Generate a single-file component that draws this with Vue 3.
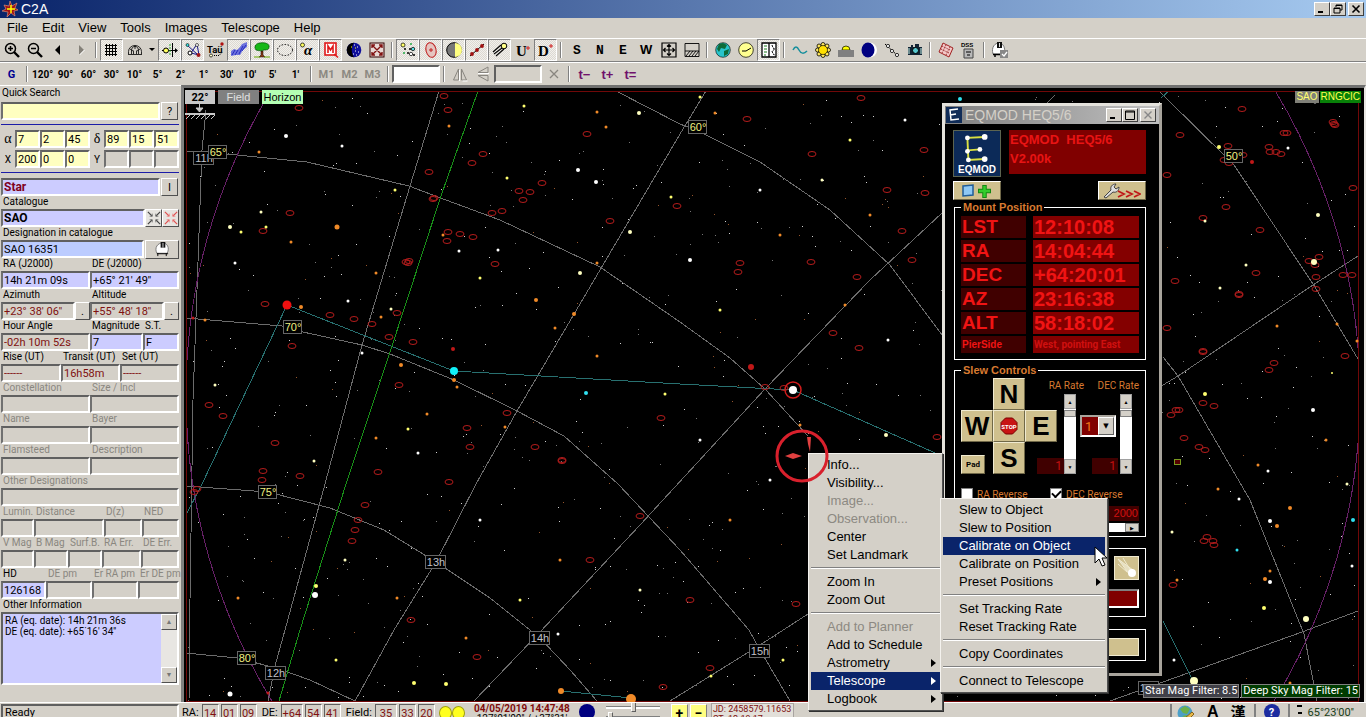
<script setup>
const menus = ['File', 'Edit', 'View', 'Tools', 'Images', 'Telescope', 'Help']

const lens = '<circle cx="6.5" cy="6.5" r="5" fill="none" stroke="#000" stroke-width="1.5"/><path d="M10 10l5 5" stroke="#000" stroke-width="2.4"/>'
const icons = {
  zin: lens + '<path d="M4 6.5h5M6.5 4v5" stroke="#000" stroke-width="1.5"/>',
  zout: lens + '<path d="M4 6.5h5" stroke="#000" stroke-width="1.5"/>',
  back: '<path d="M10 3v10L5 8z"/>',
  fwd: '<path d="M6 3v10l5-5z" fill="#848078"/><path d="M11.500 8l-5 5" stroke="#fff"/>',
  grid: '<path d="M2.500 2v12M5.500 2v12M8.500 2v12M11.500 2v12M1 3.500h12M1 6.500h12M1 9.500h12M1 12.500h12" stroke="#000"/>',
  dome: '<path d="M1 12.500h14M1.500 12V9.500a6.500 6 0 0 1 13 0V12M4.500 12V9a3.500 4.500 0 0 1 7 0v3M6.500 12V8.500M9.500 12V8.500M3 7l3 2M13 7l-3 2M8 3.500V7" fill="none" stroke="#000" stroke-width=".8"/>',
  equator: '<path d="M0 8.500h15M10.500 1v14" stroke="#000"/><path d="M8 2v12" stroke="#2fae2f" stroke-dasharray="2 1"/><circle cx="4" cy="8.500" r="2.500" fill="#ffff60" stroke="#000"/><path d="M13 6l3 2.500-3 2.500" fill="#000"/>',
  figure: '<path d="M2 3l10 9M12 2L6 11l8 2L12 2" fill="none" stroke="#000080" stroke-width=".9"/><circle cx="2.500" cy="3" r="1.500" fill="#3dd" stroke="#000" stroke-width=".6"/><circle cx="12" cy="3" r="1.500" fill="#fff" stroke="#000" stroke-width=".6"/><circle cx="5" cy="11" r="2" fill="#fff" stroke="#000"/><circle cx="13.500" cy="13" r="2" fill="#a01818"/>',
  tau: '<text x="-1" y="11" font-size="9.500" font-weight="700" font-family="Roboto,sans-serif">Taü</text><circle cx="14" cy="2" r="1.700" fill="#b01010"/><circle cx="3" cy="13.500" r="1.500" fill="#ffc" stroke="#000" stroke-width=".7"/><path d="M6 13.500h5l3-3" stroke="#000" fill="none" stroke-dasharray="1 1"/>',
  milky: '<path d="M0 9l3-2 3 1 3-3 2-3 5-2v5l-4 3-3 5H5l-5 1z" fill="#6d72dc"/><path d="M1 13L4 8M4 13l3-5M8 12l4-8M11 9l4-6" stroke="#252bc0"/>',
  tree: '<path d="M7 9h2v4l2 2H5l2-2z" fill="#8a3c10" stroke="#000" stroke-width=".5"/><path d="M2 8C-1 4 3 1 6 1c5-1 10 1 9 4 0 3-3 3-5 3-2 1-5 1-8 0z" fill="#17b817" stroke="#054f05" stroke-width=".7"/><path d="M0 15h6M10 15h6" stroke="#6a0"/>',
  bound: '<ellipse cx="8" cy="8" rx="7.500" ry="5.500" fill="none" stroke="#000" stroke-dasharray="1.500 1.500"/>',
  alpha: '<text x="4" y="13" font-size="15" font-weight="700" font-style="italic" font-family="Liberation Serif,serif">α</text><circle cx="2.500" cy="3" r="2" fill="#ffff60" stroke="#000" stroke-width=".7"/>',
  messier: '<rect x="2" y="1" width="11" height="12" fill="#fff" stroke="#e01818" stroke-width="1.600"/><path d="M5 11V4l2.500 4L10 4v7" fill="none" stroke="#e01818" stroke-width="1.600"/><path d="M11 12l4 3.500" stroke="#e01818" stroke-width="1.500"/>',
  night: '<circle cx="8" cy="8" r="7.300" fill="#10109c"/><path d="M8 .7a7.300 7.300 0 0 0 0 14.600C5 11 5 5 8 .7z" fill="#000"/><path d="M8 3h1M11 5h1M9 9h1M12 10h1M7 12h1M10 13h1" stroke="#fff"/><path d="M5 5h1M9 6h1" stroke="#ff0"/>',
  full: '<rect x="1" y="1" width="14" height="14" fill="#e8d8d4" stroke="#300"/><path d="M3 3l10 10M13 3L3 13M3 6V3h3M10 3h3v3M13 10v3h-3M6 13H3v-3" fill="none" stroke="#801010" stroke-width="1.400"/>',
  stars: '<circle cx="3" cy="3" r="2" fill="#ff6" stroke="#000" stroke-width=".7"/><circle cx="13" cy="7" r="1.700" fill="#5dd" stroke="#000" stroke-width=".7"/><circle cx="11" cy="12" r="1.700" fill="#fff" stroke="#000" stroke-width=".7"/><path d="M4 7h2M9 7h2M7 11h2M13 13h2" stroke="#000" stroke-width="1.500"/><path d="M10 2h2M3 11h2" stroke="#2a4" stroke-width="1.500"/>',
  dso: '<ellipse cx="8" cy="8" rx="5" ry="7.500" fill="#e5c5c0" stroke="#c02020" transform="rotate(-15 8 8)"/><path d="M6 8h4M8 6v4" stroke="#c02020"/>',
  planet: '<circle cx="8" cy="8" r="7.300" fill="#777" stroke="#000"/><path d="M9 1a7 7 0 0 1 0 14z" fill="#ffff80"/>',
  aster: '<path d="M1 14L15 2" stroke="#000"/><circle cx="3" cy="12" r="1.900" fill="#a01010"/><circle cx="8" cy="8" r="1.900" fill="#a01010"/><circle cx="13" cy="4" r="1.900" fill="#a01010"/>',
  comet: '<path d="M9 3L1 10M10 6L2 12M12 7l-8 7" stroke="#000" stroke-width="1.100"/><circle cx="12" cy="4" r="2.800" fill="#ff8" stroke="#000"/>',
  u: '<text x="1" y="14" font-size="15" font-weight="700" font-family="Liberation Serif,serif">U</text><path d="M11 6h4M13 4v4" stroke="#d02020"/>',
  d: '<text x="0" y="14" font-size="15" font-weight="700" font-family="Liberation Serif,serif">D</text><path d="M11 4h4M13 2v4" stroke="#d02020"/>',
  s: '<text x="4" y="12" font-size="13" font-weight="700" font-family="Liberation Mono,monospace">S</text>',
  n: '<text x="4" y="12" font-size="13" font-weight="700" font-family="Liberation Mono,monospace">N</text>',
  e: '<text x="4" y="12" font-size="13" font-weight="700" font-family="Liberation Mono,monospace">E</text>',
  w: '<text x="2" y="12" font-size="13" font-weight="700" font-family="Liberation Sans,sans-serif">W</text>',
  zenith: '<path d="M1 1h14v14H1zM8 3v10M3 8h10M6 4.500L8 2.500l2 2M6 11.500l2 2 2-2M4.500 6l-2 2 2 2M11.500 6l2 2-2 2" fill="none" stroke="#000" stroke-width="1.200"/>',
  horizon: '<path d="M1 1.500h14v13H1zM1 9h14M2 14l4-5M5 14l4-5M8 14l4-5M11 14l4-5" fill="none" stroke="#000" stroke-width=".9"/>',
  globe: '<circle cx="8" cy="8" r="7.300" fill="#28c4cc" stroke="#000" stroke-width=".6"/><path d="M4 2l4-1 4 2-2 4-4-1-2 4-2-3zM9 9l5-2-1 5-4 2z" fill="#0d6b38"/>',
  clock: '<circle cx="8" cy="8" r="7.300" fill="#ffff90" stroke="#443"/><path d="M4 9h4l5-3" fill="none" stroke="#000"/>',
  panel: '<path d="M1 1h14v14H1zM8 1v14" fill="#fff" stroke="#000" stroke-width="1.300"/><path d="M3 4h3M3 7h3M3 10h3M3 13h2" stroke="#1a7a1a"/><path d="M11 3l1 3 2 1-3 2 1 3 2 1" fill="none" stroke="#000" stroke-dasharray="2 1"/>',
  wave: '<path d="M1 8c2-4 4-4 6 0s5 4 8 1" fill="none" stroke="#168f9c" stroke-width="1.500"/>',
  sun: '<g fill="#ffe860" stroke="#000" stroke-width=".8"><circle cx="8" cy="2.500" r="2"/><circle cx="8" cy="13.500" r="2"/><circle cx="2.500" cy="8" r="2"/><circle cx="13.500" cy="8" r="2"/><circle cx="4" cy="4" r="2"/><circle cx="12" cy="4" r="2"/><circle cx="4" cy="12" r="2"/><circle cx="12" cy="12" r="2"/></g><circle cx="8" cy="8" r="4.500" fill="#ffe000" stroke="#000" stroke-width=".6"/>',
  rise: '<path d="M4 8a4 4 0 0 1 8 0z" fill="#ff0" stroke="#000" stroke-width=".7"/><path d="M0 8h16v7H0z" fill="#808080"/>',
  moon: '<circle cx="8.500" cy="8" r="7.500" fill="#fff"/><ellipse cx="7" cy="8" rx="6.500" ry="7.500" fill="#000080"/>',
  nodes: '<path d="M1 2l13 12" stroke="#000" stroke-dasharray="2 1"/><circle cx="4" cy="4" r="1.600" fill="#fff" stroke="#000" stroke-width=".8"/><circle cx="8" cy="9" r="1.600" fill="#fff" stroke="#000" stroke-width=".8"/><circle cx="13" cy="13" r="1.600" fill="#fff" stroke="#000" stroke-width=".8"/>',
  camera: '<path d="M1 5h3V3h2v2h2V2h4v3h3v8H1z" fill="#123"/><path d="M2 6v6M14 6v6" stroke="#8cb0b0" stroke-width="1.500"/><circle cx="8.500" cy="8.500" r="3" fill="#58c8d0" stroke="#000"/>',
  field: '<path d="M5 1l10 5-4 9L1 10z" fill="#f3c8c8" stroke="#a02020"/><path d="M4 4l8 4M3 7l8 4M8 3l-4 8M12 5l-4 8" stroke="#902020" stroke-dasharray="1 1"/>',
  dss: '<path d="M3 7h9v9H3z" fill="#b8b8b8" stroke="#444"/><path d="M5 10h5M6 13h3" stroke="#000"/><text x="0" y="5" font-size="6" font-weight="700" font-family="Liberation Sans,sans-serif">DSS</text>',
  scope: '<path d="M2 12C-1 6 3 1 8 1s8 5 5 11z" fill="#fff" stroke="#777"/><path d="M6 0h5v6H6z" fill="#111"/><path d="M8.500 1v5" stroke="#ddd"/><path d="M2 12.500h12M3 12v3M12 12v3" stroke="#000"/>',
  scopeOk: '<path d="M1 12C-1 5 3 1 7 1s7 5 5 11z" fill="#fff" stroke="#777"/><path d="M5 0h5v6H5z" fill="#111"/><path d="M7.500 1v4" stroke="#ddd"/><path d="M1 12.500h7M3 12v3" stroke="#000" stroke-width="1.500"/><path d="M8 8h8v8H8z" fill="#888"/><path d="M10 12l2 2 3-4" fill="none" stroke="#fff" stroke-width="1.300"/>',
  flipH: '<path d="M6.500 3v11h-5zM9.500 3v11h5z" fill="none" stroke="#898680"/><path d="M7.500 4v11M15.500 15h-5" stroke="#fff"/>',
  flipV: '<path d="M3 6.500L13 1v5.500zM3 9.500L13 15V9.500z" fill="none" stroke="#898680"/><path d="M3 7.500h11" stroke="#fff"/>',
  cross: '<path d="M4 4l8 8M12 4l-8 8" stroke="#898680" stroke-width="1.300"/>',
}

const toolGroups = [
  [['zin', 0], ['zout', 0], ['back', 0], ['fwd', 0]],
  [['grid', 1], ['dome', 0], ['drop', 0], ['equator', 1], ['figure', 1], ['tau', 0], ['milky', 1], ['tree', 1], ['bound', 1], ['alpha', 1], ['messier', 1], ['night', 0], ['full', 0]],
  [['stars', 1], ['dso', 1], ['planet', 1], ['aster', 1], ['comet', 1], ['u', 0], ['d', 1]],
  [['s', 0], ['n', 0], ['e', 0], ['w', 0], ['zenith', 0], ['horizon', 0]],
  [['globe', 0], ['clock', 0], ['panel', 1]],
  [['wave', 0], ['sun', 0], ['rise', 0], ['moon', 0], ['nodes', 0], ['camera', 0]],
  [['field', 0], ['dss', 0]],
  [['scopeOk', 0]],
]
const fovs = ['120°', '90°', '60°', '30°', '10°', '5°', '2°', '1°', "30'", "10'", "5'", "1'"]

// Each cell: [label, value, kind, has a side button]
const rows = [
  { cls: 'c-half', cells: [['RA (J2000)', '14h 21m 09s', 'blue'], ['DE (J2000)', "+65° 21' 49''", 'blue']] },
  { cls: 'c-half', cells: [['Azimuth', "+23° 38' 06''", 'red', 1], ['Altitude', "+55° 48' 18''", 'red', 1]] },
  { cls: 'c-hour', cells: [['Hour Angle', '-02h 10m 52s', 'red'], ['Magnitude', '7', 'blue'], ['S.T.', 'F', 'blue']] },
  { cls: 'c-third', cells: [['Rise (UT)', '------', 'red'], ['Transit (UT)', '16h58m', 'red'], ['Set (UT)', '------', 'red']] },
  { cls: 'c-half', cells: [['Constellation', '', 'off'], ['Size / Incl', '', 'off']] },
  { cls: 'c-half', cells: [['Name', '', 'off'], ['Bayer', '', 'off']] },
  { cls: 'c-half', cells: [['Flamsteed', '', 'off'], ['Description', '', 'off']] },
  { cls: 'c-one', cells: [['Other Designations', '', 'off']] },
  { cls: 'c-dist', cells: [['Lumin.', '', 'off'], ['Distance', '', 'off'], ['D(z)', '', 'off'], ['NED', '', 'off']] },
  { cls: 'c-mag', cells: [['V Mag', '', 'off'], ['B Mag', '', 'off'], ['Surf.B.', '', 'off'], ['RA Err.', '', 'off'], ['DE Err.', '', 'off']] },
  { cls: 'c-quart', cells: [['HD', '126168', 'blue'], ['DE pm', '', 'off'], ['Er RA pm', '', 'off'], ['Er DE pm', '', 'off']] },
]
const alphaIn = ['7', '2', '45']
const deltaIn = ['89', '15', '51']
const xIn = ['200', '0', '0']

const lines = [
  'M186 151L206 152L237 155L307 162L409 186L446 200L500 220L600 267L680 322L730 358L765 389L808 436',
  'M186 318L282 326L303 332L362 345L390 354L454 380L517 411L564 436L618 484L680 550L749 630L760 650L790 701',
  'M186 486L268 492L330 508L384 530L436 562L490 598L540 638L571 671L597 701',
  'M186 653L237 658L276 668L310 680L355 701',
  'M616 91L680 124L698 131L760 162L830 210L890 265L942 335',
  'M206 110L202 150L197 290L193 400L190 600L189 701',
  'M439 91L410 186L362 345L325 484L285 630L275 666L268 701',
  'M706 91L680 134L600 270L517 411L476 484L436 562L394 630L355 701',
  'M474 701L540 632L640 525L765 389L870 280L942 213L1055 95',
  'M670 701L760 645L808 614L1000 490L1163 385L1178 376L1313 285L1358 256',
  'M1160 92L1234 165L1315 287L1358 359',
  'M1163 357L1178 376L1250 500L1304 634L1317 701',
  'M1110 701L1163 682L1302 632L1358 611',
]
const teal = [
  'M186 515L202 484L287 305L454 371L680 384L793 390L942 456',
  'M561 691L631 698',
  'M1163 621L1193 681',
  'M1161 98L1170 90',
]
const galaxies = `444,96 299,108 448,110 587,134 483,154 472,163 429,172 542,183 519,191 530,192 523,200 434,198 433,199 492,213 502,211
610,221 290,213 263,231 448,232 460,234 473,237 447,241 406,262 409,261 408,263 495,264 265,304 330,315 354,319 372,324 397,313 389,337
413,342 292,346 399,385 209,405 223,416 467,428 470,447 507,413 535,447 562,460 562,461 661,418 275,443 263,471 262,480 300,476 449,482
677,206 197,489 194,492 477,657 710,668 663,687 796,604 937,437 1242,109 1180,135 1228,146 1224,160 1229,163 1243,155 1287,133 1284,133
1269,147 1270,152 1276,152 1281,154 1333,122 1335,125 1334,124 1167,175 1226,207 1353,188 1203,218 1260,230 1175,281 1256,273 1239,294
1239,295 1309,261 1319,257 1315,265 1316,277 1316,289 1343,275 1352,275 1167,328 1203,351 1203,352 1274,363 1269,370 1345,356 1203,403
1214,406 1179,410 1176,410 1171,415 1184,438 1199,447 1205,450 1207,537 1204,541 1213,541 1214,545 1173,585 738,272 740,263 811,262
857,277 912,260 924,150 887,190 925,193 833,333 859,348 765,387 784,388 861,98 747,119 358,520 355,530 365,505 640,516 352,541 378,472
812,154 902,231 590,560 690,600 411,620`.split(/\s+/).map(p => p.split(','))

// Each star: x, y, radius, colour key
const tint = { w: '#ffffff', y: '#ffff70', c: '#ffffc0', o: '#f08a28', b: '#30e0f0', r: '#c01818' }
const stars = `286,136,2,w 342,146,1.5,w 230,227,2,c 241,232,1.5,y 261,212,1.5,c 266,227,1.5,y 259,152,1.5,o 291,242,1.5,o 235,263,1.5,w
337,227,2.5,o 395,190,1.5,y 449,126,1.5,o 524,106,1.5,y 597,112,1.5,o 606,127,1.5,o 639,113,2,c 578,170,2,w 596,182,2,w 507,178,1.5,y
459,251,1.5,w 498,250,1.5,w 443,235,1.5,o 480,278,1.5,y 597,263,1.5,o 630,232,2,c 580,273,2,c 376,273,1.5,o 348,301,1.5,w 301,307,2,o
391,309,1.5,c 381,317,1.5,o 193,318,1.5,r 205,320,1.5,o 362,353,1.5,w 453,349,2,r 401,365,2,o 454,380,2,o 457,387,1.5,o 555,328,1.5,o
536,300,2,o 574,314,2,o 597,356,1.5,o 586,393,2,b 665,394,1.5,y 427,414,1.5,o 408,429,1.5,y 505,427,1.5,o 376,438,1.5,o 418,453,1.5,w
314,461,1.5,c 215,385,1.5,c 671,197,1.5,y 397,598,1.5,o 316,586,2,y 315,595,3,w 336,660,1.5,y 414,683,2,y 446,684,2,y
466,638,1.5,o 558,634,1.5,w 711,676,1.5,y 783,660,1.5,y 230,694,2.5,w 268,693,1.5,r 561,691,3,o 631,699,5,o 886,435,2,c
800,425,1.5,o 751,367,3,r 700,97,1.5,y 960,99,2,b 1315,102,1.5,w 1219,147,2,y 1288,148,1.5,w 1252,162,2,r 1318,215,2,c 1205,221,1.5,c
1246,265,1.5,c 1314,262,3,c 1220,288,1.5,c 1277,326,1.5,o 1337,324,1.5,o 1357,341,1.5,o 1332,373,1,y 1205,394,2,y 1313,410,2,w
1326,440,1.5,o 1258,465,1.5,o 1268,471,1.5,w 1218,489,1.5,o 1239,499,1.5,w 1347,484,1.5,c 1290,508,2,o 1270,521,2,w 1277,526,2,o
1353,520,2,b 1237,550,1.5,b 1172,532,1.5,c 1352,566,1.5,w 1270,571,1.5,o 1265,579,2,o 1270,582,2,w 1177,580,1.5,o 1264,608,2,y
1306,619,3,c 1194,681,4,c 1174,660,1.5,w 1290,683,1.5,o 715,113,1.5,o 760,190,1.5,w 822,180,1.5,c 870,215,1.5,o 690,260,2,w
905,120,1.5,w 845,305,1.5,o 700,440,1.5,w 640,590,1.5,c 560,560,1.5,o 480,520,1.5,w 520,600,1.5,y 730,520,1.5,o 770,480,1.5,w
720,310,1.5,y 888,340,1.5,w 780,235,1.5,o 850,140,1.5,y 238,598,1.5,o 345,560,1.5,c`.split(/\s+/).map(p => {
  const [x, y, r, c] = p.split(',')
  return { x, y, r, fill: tint[c] }
})

let seed = 20190504
const rnd = () => {
  seed = (seed * 1664525 + 1013904223) % 4294967296
  return seed / 4294967296
}
const specks = { bright: '', dim: '', warm: '' }
for (let i = 0; i < 900; i++) {
  const dot = `M${188 + Math.floor(rnd() * 1168)} ${93 + Math.floor(rnd() * 606)}h1v1h-1z`
  const k = rnd()
  specks[k < 0.5 ? 'bright' : k < 0.88 ? 'dim' : 'warm'] += dot
}

const gridLabels = [
  [698, 127, '60°', 1], [293, 327, '70°', 1], [268, 492, '75°', 1], [247, 658, '80°', 1], [1234, 156, '50°', 1],
  [204, 158, '11h', 0], [218, 152, '65°', 1], [436, 562, '13h', 0], [540, 638, '14h', 0], [276, 673, '12h', 0], [760, 651, '15h', 0], [1149, 688, '16h', 0],
]

const mount = [['LST', '12:10:08'], ['RA', '14:04:44'], ['DEC', '+64:20:01'], ['AZ', '23:16:38'], ['ALT', '58:18:02']]

const context = [
  ['Info...'], ['Visibility...'], ['Image...', 'off'], ['Observation...', 'off'], ['Center'], ['Set Landmark'], null,
  ['Zoom In'], ['Zoom Out'], null,
  ['Add to Planner', 'off'], ['Add to Schedule'], ['Astrometry', 'more'], ['Telescope', 'more on'], ['Logbook', 'more'],
]
const submenu = [
  ['Slew to Object'], ['Slew to Position'], ['Calibrate on Object', 'on'], ['Calibrate on Position'], ['Preset Positions', 'more'], null,
  ['Set Tracking Rate'], ['Reset Tracking Rate'], null, ['Copy Coordinates'], null, ['Connect to Telescope'],
]
</script>

<template>
  <div class="app">
    <header class="title">
      <svg class="logo" viewBox="0 0 16 16"><path d="M8 0l2 5 5-3-2 5 3 2-4 1 1 5-4-3-4 4 1-5-6-1 4-2-2-4 5 1z" fill="#a01414" stroke="#f0a080" stroke-width=".6" /><path d="M9 4v8M5 8h8" stroke="#ff0" stroke-width="1.500" /></svg>
      <h1>C2A</h1>
      <div class="winbtns">
        <button aria-label="Minimize"><svg viewBox="0 0 12 10"><path d="M2 8h5" stroke="#000" stroke-width="2" /></svg></button>
        <button aria-label="Restore"><svg viewBox="0 0 12 10"><path d="M4 3V1h6v5H8M4 1.500h6M2 4h6v5H2zM2 4.500h6" fill="none" stroke="#000" /></svg></button>
        <button aria-label="Close" class="gap"><svg viewBox="0 0 12 10"><path d="M2.500 1.500l7 7M9.500 1.500l-7 7" stroke="#000" stroke-width="1.600" /></svg></button>
      </div>
    </header>

    <nav class="menubar"><button v-for="m in menus" :key="m">{{ m }}</button></nav>

    <div class="toolbar">
      <div v-for="(g, gi) in toolGroups" :key="gi" class="group">
        <button v-for="[name, on] in g" :key="name" :class="{ pressed: on, drop: name === 'drop' }" :aria-label="name">
          <svg v-if="name !== 'drop'" viewBox="0 0 16 16" v-html="icons[name]"></svg>
          <svg v-else viewBox="0 0 6 4" class="tiny"><path d="M0 0h6L3 3z" /></svg>
        </button>
      </div>
    </div>

    <div class="toolbar second">
      <div class="group"><button class="blue">G</button></div>
      <div class="group"><button v-for="f in fovs" :key="f">{{ f }}</button></div>
      <div class="group"><button v-for="m in ['M1', 'M2', 'M3']" :key="m" class="dis">{{ m }}</button></div>
      <div class="group"><input class="white" aria-label="Field of view" /></div>
      <div class="group">
        <button aria-label="Mirror"><svg viewBox="0 0 16 16" v-html="icons.flipH"></svg></button>
        <button aria-label="Flip"><svg viewBox="0 0 16 16" v-html="icons.flipV"></svg></button>
        <input aria-label="Rotation" disabled />
        <button aria-label="Clear"><svg viewBox="0 0 16 16" v-html="icons.cross"></svg></button>
      </div>
      <div class="group"><button v-for="t in ['t−', 't+', 't=']" :key="t" class="time">{{ t }}</button></div>
    </div>

    <main class="work">
      <aside class="side">
        <label class="lab quick" for="quick">Quick Search</label>
        <div class="line"><input id="quick" class="yel" /><button class="sq">?</button></div>
        <hr />
        <div class="coords">
          <span>α</span><input v-for="(v, i) in alphaIn" :key="'a' + i" class="yel" :value="v" aria-label="Right ascension" />
          <span>δ</span><input v-for="(v, i) in deltaIn" :key="'d' + i" class="yel" :value="v" aria-label="Declination" />
          <span class="sm">X</span><input v-for="(v, i) in xIn" :key="'x' + i" class="yel" :value="v" aria-label="X" />
          <span class="sm">Y</span><input v-for="i in 3" :key="'y' + i" class="off" aria-label="Y" />
        </div>
        <hr />
        <div class="line"><input class="blue star" value="Star" aria-label="Object type" readonly /><button class="sq">I</button></div>
        <label class="lab" for="cat">Catalogue</label>
        <div class="line">
          <input id="cat" class="blue strong" value="SAO" readonly />
          <button class="pt" aria-label="Center on map"><svg viewBox="0 0 16 16"><path d="M1 1l5 5M15 1l-5 5M1 15l5-5M15 15l-5-5" stroke="#444" stroke-width="1.300" /><path d="M6 3v3H3M10 3v3h3M6 13v-3H3M10 13v-3h3" fill="none" stroke="#777" /></svg></button>
          <button class="pt" aria-label="Center and mark"><svg viewBox="0 0 16 16"><path d="M1 1l5 5M15 1l-5 5M1 15l5-5M15 15l-5-5" stroke="#e05050" stroke-width="1.300" /><path d="M6 3v3H3M10 3v3h3M6 13v-3H3M10 13v-3h3" fill="none" stroke="#e88" /></svg></button>
        </div>
        <label class="lab" for="des">Designation in catalogue</label>
        <div class="line">
          <input id="des" class="sel" value="SAO 16351" readonly />
          <button class="scope" aria-label="Slew telescope"><svg viewBox="0 0 16 16" v-html="icons.scope"></svg></button>
        </div>
        <div v-for="(r, ri) in rows" :key="ri" class="row" :class="r.cls">
          <div v-for="([l, v, k, b], ci) in r.cells" :key="ci" class="cell">
            <label class="lab" :class="{ grey: k === 'off' }" :for="`f${ri}-${ci}`">{{ l }}</label>
            <div class="line"><input :id="`f${ri}-${ci}`" :class="k" :value="v" readonly /><button v-if="b" class="dot">.</button></div>
          </div>
        </div>
        <label class="lab" for="info">Other Information</label>
        <div class="info">
          <textarea id="info" readonly>RA (eq. date): 14h 21m 36s
DE (eq. date): +65˙16' 34''</textarea>
          <div class="scroll"><button aria-label="Scroll up">▲</button><button aria-label="Scroll down">▼</button></div>
        </div>
      </aside>

      <section class="map">
        <svg class="sky" viewBox="184 88 1180 614" preserveAspectRatio="xMinYMin slice">
          <defs><clipPath id="skyclip"><rect x="186" y="91" width="1173" height="611" /></clipPath></defs>
          <g clip-path="url(#skyclip)">
            <g shape-rendering="crispEdges">
              <path :d="specks.bright" fill="#d0d0d0" /><path :d="specks.dim" fill="#757575" /><path :d="specks.warm" fill="#96552c" />
              <path v-for="(d, i) in lines" :key="i" :d="d" fill="none" stroke="#6c6c6c" />
              <path v-for="(d, i) in teal" :key="'t' + i" :d="d" fill="none" stroke="#287070" />
              <path d="M478 91L441 196L390 352L346 484L300 630L279 701" fill="none" stroke="#189018" />
              <circle cx="773" cy="395" r="587" fill="none" stroke="#672067" />
            </g>
            <ellipse v-for="([x, y], i) in galaxies" :key="'g' + i" :cx="x" :cy="y" rx="4" ry="2.500" fill="none" stroke="#b41c1c" />
          </g>
          <rect x="186.500" y="91.500" width="1172" height="610" fill="none" stroke="#700808" />
          <circle v-for="(s, i) in stars" :key="'s' + i" :cx="s.x" :cy="s.y" :r="s.r" :fill="s.fill" />
          <circle cx="287" cy="305" r="4.500" fill="#f01010" /><circle cx="454" cy="371" r="4" fill="#10f0f8" />
          <circle cx="793" cy="390" r="4" fill="#fff" /><circle cx="793" cy="390" r="8" fill="none" stroke="#d01c1c" stroke-width="1.500" />
          <rect x="1174.500" y="459.500" width="6" height="5" fill="#500" stroke="#7a9a20" />
          <g v-for="([x, y, t, dec], i) in gridLabels" :key="'l' + i">
            <rect :x="x - (dec ? 9.5 : 10.5)" :y="y - 6.5" :width="dec ? 18 : 20" height="13" fill="#000" stroke="#666" />
            <text :x="x" :y="y + 4" text-anchor="middle" :class="dec ? 'dec' : 'hr'">{{ t }}</text>
          </g>
          <g stroke="#c8c8c8" fill="#c8c8c8"><path d="M199.500 104v8M196 108h7l-3.500 4z" /><path d="M185 114h30" stroke-width="2" /><path d="M186 119l4-4M191 119l4-4M196 119l4-4M201 119l4-4M206 119l4-4M211 119l4-4" /></g>
        </svg>
        <div class="tabs"><button class="deg">22°</button><button class="fld">Field</button><button class="hor">Horizon</button></div>
        <div class="cats"><span class="sao">SAO</span><span class="rng">RNGCIC</span></div>
        <div class="filters"><span>Star Mag Filter: 8.5</span><span class="deep">Deep Sky Mag Filter: 15</span></div>
      </section>
    </main>

    <footer class="status">
      <div class="ready">Ready</div>
      <span class="sl ra">RA:</span><b>14</b><b>01</b><b>09</b>
      <span class="sl">DE:</span><b class="w">+64</b><b>54</b><b>41</b>
      <span class="sl">Field:</span><b class="w">35</b><b>33</b><b>20</b>
      <i class="bulb first"></i><i class="bulb"></i>
      <div class="date"><strong>04/05/2019 14:47:48</strong><span>127°01'00'' / +37°31'</span></div>
      <i class="ball"></i>
      <div class="sliders"><input type="range" value="52" aria-label="Speed" /><input type="range" value="5" aria-label="Step" /></div>
      <button class="pm">+</button><button class="pm">−</button>
      <div class="jd"><span>JD: 2458579.11653</span><span>ST: 12 19 17</span></div>
      <div class="ime">
        <svg viewBox="0 0 18 16"><circle cx="8" cy="9" r="7.500" fill="#4b9fc8" /><path d="M3 5l5-3 5 3-3 5-4-1zM5 12l5-1 2 4z" fill="#6cb04c" /><path d="M8 14l7-6 2 2-6 6z" fill="#e8b848" stroke="#85621c" /></svg>
        <b class="latin">A</b><b class="han">漢</b>
      </div>
      <button class="help">?</button>
      <div class="tray"><svg viewBox="0 0 6 12"><path d="M0 2h5M1 9h4" stroke="#000" stroke-width="1.800" /></svg><span>65°23'00''</span></div>
    </footer>

    <section class="eq">
      <header class="eqtitle">
        <svg viewBox="0 0 16 16"><rect width="16" height="16" fill="#102c58" /><path d="M12 2L4 3l1 10 8-1M4 8l6-1" fill="none" stroke="#fff" stroke-width="1.500" /></svg>
        <h2>EQMOD HEQ5/6</h2>
        <div class="winbtns">
          <button aria-label="Minimize window"><svg viewBox="0 0 12 10"><path d="M2 8h5" stroke="#000" stroke-width="2" /></svg></button>
          <button aria-label="Maximize window"><svg viewBox="0 0 12 10"><path d="M1.500 1h9v8.500h-9zM1.500 2h9" fill="none" stroke="#000" /></svg></button>
          <button aria-label="Close window" class="gap"><svg viewBox="0 0 12 10"><path d="M2.500 1.500l7 7M9.500 1.500l-7 7" stroke="#888" stroke-width="1.400" /></svg></button>
        </div>
      </header>
      <div class="eqbody">
        <div class="eqhead">
          <div class="badge">
            <svg viewBox="0 0 48 32"><path d="M32 5L14 6l1 23 17-1M14 19l13-1" fill="none" stroke="#d8e040" stroke-width="2" /><g fill="#fff"><circle cx="32" cy="5" r="3" /><circle cx="14" cy="6" r="2.500" /><circle cx="14" cy="20" r="2.500" /><circle cx="27" cy="18" r="2.500" /><circle cx="15" cy="29" r="2.500" /><circle cx="32" cy="28" r="3" /></g></svg>
            <span>EQMOD</span>
          </div>
          <div class="ver">EQMOD&nbsp; HEQ5/6<br />V2.00k</div>
        </div>
        <div class="eqbtns">
          <button aria-label="Add display"><svg viewBox="0 0 32 16"><path d="M2 3l10-1v10L2 13z" fill="#8ec8f4" stroke="#1f5c98" stroke-width="1.500" /><path d="M17 8h13M23.500 2v13" stroke="#138813" stroke-width="4.500" /><path d="M18 8h11M23.500 3v11" stroke="#34cc2c" stroke-width="2.500" /></svg></button>
          <button aria-label="Setup"><svg viewBox="0 0 38 16"><path d="M1 14l7-7c-1-3 1-6 5-6l-2 3 2 2 3-2c0 4-3 6-6 5l-7 6z" fill="#ddd" stroke="#444" /><path d="M15 8l6 3-6 3M23 8l6 3-6 3M31 8l6 3-6 3" fill="none" stroke="#c01818" stroke-width="1.800" /></svg></button>
        </div>
        <fieldset class="mount">
          <legend>Mount Position</legend>
          <dl>
            <template v-for="[k, v] in mount" :key="k"><dt>{{ k }}</dt><dd>{{ v }}</dd></template>
            <dt class="pier">PierSide</dt><dd class="pier">West, pointing East</dd>
          </dl>
        </fieldset>
        <fieldset class="slew">
          <legend>Slew Controls</legend>
          <div class="pad">
            <button class="n">N</button><button class="w">W</button>
            <button class="stop" aria-label="Stop"><svg viewBox="0 0 18 18"><path d="M5.500 1h7L17 5.500v7L12.500 17h-7L1 12.500v-7z" fill="#c81414" stroke="#700" /><text x="9" y="11.500" text-anchor="middle" font-size="6" font-weight="700" fill="#fff" font-family="Roboto,sans-serif">STOP</text></svg></button>
            <button class="e">E</button><button class="s">S</button><button class="pd">Pad</button>
            <span class="rl">RA Rate</span><span class="dl">DEC Rate</span>
            <span class="rv">1</span><span class="dv">1</span>
            <div class="vs rs"><button aria-label="RA rate up">▲</button><i></i><button aria-label="RA rate down">▼</button></div>
            <div class="vs ds"><button aria-label="DEC rate up">▲</button><i></i><button aria-label="DEC rate down">▼</button></div>
            <div class="pick"><select aria-label="Rate preset"><option>1</option></select><i>▼</i></div>
          </div>
          <div class="checks">
            <label><input type="checkbox" />RA Reverse</label>
            <label><input type="checkbox" checked />DEC Reverse</label>
          </div>
          <div class="val">2000</div>
          <div class="hs"><button aria-label="Next">▶</button></div>
        </fieldset>
        <fieldset class="track">
          <button class="meteor" aria-label="Track"><svg viewBox="0 0 22 22"><path d="M2 2l11 15 4-4zM7 1l8 13M2 7l9 8" fill="#e6dfc0" stroke="#f0ead0" /><circle cx="16" cy="16" r="4" fill="#fff" /></svg></button>
          <div class="trk"></div>
        </fieldset>
        <fieldset class="park"><button aria-label="Park"></button></fieldset>
      </div>
    </section>

    <ul class="pop ctx" role="menu">
      <li v-for="(it, i) in context" :key="i" :class="it ? it[1] : 'sep'"><button v-if="it" role="menuitem">{{ it[0] }}</button></li>
    </ul>
    <svg class="aim" viewBox="0 0 56 56"><path d="M11 28l8-3 9 3-9 3zM33 9h4l-1 15-2-8z" fill="#e04040" /><circle cx="28" cy="28" r="25" fill="none" stroke="#d8202c" stroke-width="3" /></svg>
    <ul class="pop sub" role="menu">
      <li v-for="(it, i) in submenu" :key="i" :class="it ? it[1] : 'sep'"><button v-if="it" role="menuitem">{{ it[0] }}</button></li>
    </ul>
    <svg class="cursor" viewBox="0 0 13 22"><path d="M1 1v16l4-4 3 7 3-1-3-7h5z" fill="#fff" stroke="#000" /></svg>
  </div>
</template>

<style>
body { background: #d4d0c8; overflow: hidden; }
</style>

<style scoped>
.app { position: relative; display: flex; flex-direction: column; height: 100vh; overflow: hidden; background: #d4d0c8; font-family: "Liberation Sans", Arial, sans-serif; font-size: 13px; color: #000; }
.app * { box-sizing: border-box; }
button { font: inherit; color: inherit; padding: 0; border: 0; background: none; display: flex; align-items: center; justify-content: center; }
h1, h2 { margin: 0; font-size: 13px; font-weight: 400; }
input, textarea, select { font: inherit; color: inherit; border-radius: 0; min-width: 0; }

.title { display: flex; align-items: center; flex: none; height: 18px; padding: 0 2px; background: linear-gradient(90deg, #0a246a, #a6caf0); color: #fff; }
.title .logo { width: 16px; height: 16px; margin-right: 3px; }
.title h1 { line-height: 18px; font-size: 14px; }
.winbtns { display: flex; margin-left: auto; }
.winbtns button { width: 16px; height: 14px; background: #d4d0c8; border: 1px solid; border-color: #fff #404040 #404040 #fff; }
.winbtns svg { width: 12px; height: 10px; }
.winbtns .gap { margin-left: 2px; }

.menubar { display: flex; flex: none; height: 20px; gap: 14px; padding: 0 7px; }
.menubar button { line-height: 20px; }

.toolbar { display: flex; flex: none; height: 24px; border-top: 1px solid #fff; border-bottom: 1px solid #808080; }
.toolbar.second { height: 23px; border-bottom: 0; font: 700 10px Roboto, sans-serif; }
.group { display: flex; align-items: center; }
.group + .group { position: relative; padding-left: 8px; }
.group + .group::before { content: ""; position: absolute; left: 3px; top: 3px; bottom: 3px; width: 2px; background: linear-gradient(90deg, #808080 50%, #fff 50%); }
.group button { width: 23px; height: 22px; }
.group svg { width: 16px; height: 16px; overflow: visible; }
.group .drop { width: 12px; }
.group .tiny { width: 6px; height: 4px; }
.group .pressed { border: 1px solid; border-color: #808080 #fff #fff #808080; background: repeating-conic-gradient(#f2f0ec 0 25%, #dcd9d2 0 50%) 0 0 / 2px 2px; }
.group input { width: 48px; height: 18px; border: 2px solid; border-color: #606060 #fff #fff #606060; background: #d4d0c8; }
.group .white { background: #fff; }
.group .blue { color: #000090; font-size: 11px; }
.group .dis { color: #8c8982; font-size: 11px; }
.group .time { color: #70106c; font: 700 13px "Liberation Sans", sans-serif; }

.work { display: flex; flex: 1; min-height: 0; }
.side { flex: none; width: 181px; padding: 0 2px 0 1px; border-top: 1px solid #fff; overflow: hidden; font: 11px Roboto, sans-serif; }
.lab { display: block; height: 13px; padding-left: 2px; font-size: 10px; line-height: 12px; white-space: nowrap; }
.lab.quick { height: 16px; padding-left: 1px; line-height: 14px; }
.grey { color: #8a8780; }
.line { display: flex; height: 18px; }
.line input, .coords input { flex: 1; width: 100%; height: 18px; padding: 0 1px; border: 2px solid; border-color: #707070 #fff #fff #707070; border-top-color: #606060; background: #d4d0c8; }
.side .yel { background: #ffffc0; }
.side .blue { background: #ccccff; }
.side .sel { background: #bcccff; }
.side .red { color: #801010; }
.side .star { color: #800020; font-weight: 700; font-size: 12px; }
.side .strong { font-weight: 700; font-size: 12px; }
.line button { flex: none; background: #d4d0c8; border: 1px solid; border-color: #fff #505050 #505050 #fff; }
.line .sq { width: 17px; margin: 0 1px; }
.line .dot { width: 15px; }
.line .pt { width: 17px; background: #e6e4e0; }
.line .pt svg { width: 14px; height: 14px; }
.line .scope { width: 34px; height: 19px; margin-left: 1px; }
.line .scope svg { width: 15px; height: 15px; }
.side hr { height: 1px; margin: 4px 0 5px; border: 0; background: #1c1ca8; }
.coords { display: grid; grid-template-columns: 14fr 25fr 25fr 25fr 14fr 25fr 25fr 25fr; row-gap: 2px; font-size: 11px; }
.coords span { display: flex; align-items: center; justify-content: center; font: 14px "Liberation Serif", serif; line-height: 14px; }
.coords .sm { font: 10px Roboto, sans-serif; }
.row { display: grid; }
.cell { min-width: 0; }
.c-one { grid-template-columns: 1fr; }
.c-half { grid-template-columns: 1fr 1fr; }
.c-hour { grid-template-columns: 89fr 53fr 36fr; }
.c-third { grid-template-columns: 60fr 59fr 59fr; }
.c-dist { grid-template-columns: 33fr 70fr 38fr 37fr; }
.c-mag { grid-template-columns: 33fr 34fr 34fr 39fr 38fr; }
.c-quart { grid-template-columns: 45fr 46fr 46fr 41fr; }
.info { display: flex; height: 73px; border: 2px solid; border-color: #606060 #fff #fff #606060; background: #ccccff; }
.info textarea { flex: 1; padding: 1px 2px; border: 0; background: none; resize: none; overflow: hidden; font: 10px Roboto, sans-serif; line-height: 11px; white-space: pre; }
.scroll { display: flex; flex-direction: column; justify-content: space-between; width: 16px; background: #e8e6e2; }
.scroll button { height: 16px; font-size: 7px; color: #777; background: #d4d0c8; border: 1px solid; border-color: #fff #505050 #505050 #fff; }

.map { position: relative; flex: 1; min-width: 0; overflow: hidden; background: #000; border: solid #808080; border-width: 3px 2px 0 3px; border-right-color: #e8e6e2; border-top-color: #707070; }
.sky { display: block; width: 100%; height: 100%; }
.sky text { font: 11px "Liberation Sans", sans-serif; }
.dec { fill: #f0f080; }
.hr { fill: #c0c0c8; }
.tabs, .cats, .filters { position: absolute; display: flex; font-size: 11px; line-height: 14px; white-space: nowrap; }
.tabs { left: 1px; top: 2px; gap: 3px; }
.tabs button { height: 14px; width: 41px; }
.tabs .deg { width: 30px; background: #c8c8c8; font: 700 11px Roboto, sans-serif; }
.tabs .fld { background: #808080; color: #e0e0e0; }
.tabs .hor { background: #b4ffb4; }
.cats { right: 3px; top: 3px; gap: 1px; font-size: 10px; line-height: 12px; }
.cats span { padding: 0 1px; }
.sao { background: #808078; color: #ffff70; }
.rng { background: #088008; color: #ffff50; }
.filters { right: 4px; bottom: 4px; gap: 2px; line-height: 12px; color: #fff; font-family: Roboto, sans-serif; }
.filters span { padding: 0 1px; background: #404048; border: 1px solid #808080; }
.filters .deep { background: #003c00; }

.status { display: flex; flex: none; align-items: flex-start; height: 15px; padding-top: 1px; border-top: 1px solid #fff; overflow: hidden; white-space: nowrap; font: 11px Roboto, sans-serif; line-height: 17px; }
.status > * { flex: none; }
.ready { width: 178px; height: 22px; margin: 0 2px 0 1px; padding-left: 2px; border: 2px solid; border-color: #606060 #fff #fff #606060; line-height: 14px; }
.sl { padding: 0 3px; }
.sl.ra { padding-left: 1px; }
.status > b { width: 17px; height: 22px; margin-right: 2px; font-weight: 400; text-align: center; color: #801010; border: 1px solid; border-color: #606060 #fff #fff #606060; }
.status > b.w { width: 22px; }
.bulb { width: 13px; height: 14px; margin-top: 2px; border-radius: 50%; background: #ffff20; border: 1px solid #a0a010; }
.bulb.first { margin-left: 2px; }
.date { width: 98px; margin: 0 0 0 8px; display: flex; flex-direction: column; align-items: center; font-size: 10px; line-height: 10px; }
.date strong { color: #800c0c; }
.ball { width: 16px; height: 16px; margin: 0 0 0 8px; border-radius: 50%; background: #000080; }
.sliders { display: flex; flex-direction: column; width: 54px; margin: -2px 11px 0; }
.sliders input { appearance: none; width: 100%; height: 10px; margin: 0; background: linear-gradient(#808080 50%, #fff 50%) 0 4px / 100% 3px no-repeat; }
.sliders input::-webkit-slider-thumb { appearance: none; width: 5px; height: 10px; background: #d4d0c8; border: 1px solid; border-color: #fff #606060 #606060 #fff; }
.pm { width: 17px; height: 18px; margin-right: 2px; background: #ffff80; border: 1px solid; border-color: #fff #808080 #808080 #fff; font-weight: 700; font-size: 14px; }
.jd { display: flex; flex-direction: column; width: 83px; margin: -1px 0 0 2px; padding-left: 1px; border: 1px solid #a8a4a0; background: #e2dfd9; color: #801010; font-size: 9px; line-height: 10px; }
.ime { display: flex; gap: 12px; margin-left: auto; padding: 0 8px 0 5px; border-left: 2px solid #808080; border-right: 2px solid #808080; }
.ime svg { width: 18px; height: 16px; }
.ime .latin { font: 700 16px "Liberation Sans", sans-serif; line-height: 16px; }
.ime .han { font: 700 15px "Noto Sans CJK SC", sans-serif; line-height: 16px; }
.help { width: 16px; height: 16px; margin: 0 8px; border-radius: 50%; background: #1c2ca0; color: #fff; font-weight: 700; }
.tray { display: flex; gap: 5px; margin-right: 12px; padding-left: 7px; border-left: 2px solid #808080; color: #184018; }
.tray svg { width: 6px; height: 12px; }

.eq { position: absolute; left: 942px; top: 103px; width: 220px; background: #000; border: 3px solid; border-color: #e4e2dc #a8a49c #a8a49c #e4e2dc; font-size: 11px; color: #d87a30; }
.eqtitle { display: flex; align-items: center; height: 18px; padding: 0 3px 0 1px; background: linear-gradient(90deg, #808080, #c0c0c0); color: #d4d0c8; }
.eqtitle > svg { width: 16px; height: 16px; margin-right: 3px; }
.eqtitle h2 { font-size: 14px; line-height: 18px; white-space: nowrap; }
.eqtitle .winbtns button { color: #000; }
.eqbody { padding: 6px 13px 12px 8px; }
.eqhead { display: flex; gap: 8px; height: 47px; }
.badge { display: flex; flex-direction: column; align-items: center; width: 48px; background: #0c2a58; border: 1px solid #5c6450; color: #fff; font: 700 10px "Liberation Sans", sans-serif; }
.badge svg { width: 46px; height: 33px; }
.ver { flex: 1; height: 44px; padding-left: 1px; background: #800000; color: #e81414; font: 700 13px "Liberation Sans", sans-serif; line-height: 19px; white-space: nowrap; }
.eqbtns { display: flex; justify-content: space-between; margin-top: 4px; }
.eq button { background: #cfc08e; }
.eqbtns button { width: 48px; height: 19px; border: 1px solid; border-color: #fff #706848 #706848 #fff; }
.eqbtns svg { height: 16px; }
.eq .winbtns button { background: #d4d0c8; }
fieldset { min-width: 0; margin: 0 0 0 1px; padding: 0 6px; border: 1px solid #fff; }
legend { height: 12px; padding: 0 2px; font-weight: 700; font-size: 11px; line-height: 12px; }
.mount { margin-top: 1px; padding-top: 3px; padding-bottom: 6px; }
dl { display: grid; grid-template-columns: 65px 1fr; column-gap: 7px; row-gap: 2px; margin: 0; color: #f01414; font-weight: 700; }
dt, dd { height: 22px; margin: 0; padding-left: 1px; line-height: 22px; font-size: 20px; background: #840000; white-space: nowrap; }
dt { background: #400000; font-size: 19px; }
dt.pier, dd.pier { height: 17px; line-height: 17px; font-size: 10px; }
dd.pier { font-family: Roboto, sans-serif; font-size: 10px; color: #d01010; }
.slew { margin-top: 4px; padding: 2px 6px 4px; }
.pad { display: grid; grid-template-columns: 32px 32px 12px 20px 7px 12px 16px 28px 12px 1fr; grid-template-rows: 32px 32px 32px; font-family: Roboto, sans-serif; font-size: 10px; }
.pad > button { color: #000; border: 1px solid; border-color: #f0ead0 #706848 #706848 #f0ead0; font: 700 26px "Liberation Sans", sans-serif; }
.pad > .n { grid-area: 1 / 2; }
.pad > .w { grid-area: 2 / 1; }
.pad > .stop { grid-area: 2 / 2; }
.stop svg { width: 18px; height: 18px; }
.pad > .e { grid-area: 2 / 3 / 3 / 5; }
.pad > .s { grid-area: 3 / 2; }
.pad > .pd { grid-area: 3 / 1; align-self: end; width: 24px; height: 19px; font: 700 8px Roboto, sans-serif; }
.rl { grid-area: 1 / 4 / 2 / 8; justify-self: end; margin-right: 8px; padding: 2px 0; white-space: nowrap; }
.dl { grid-area: 1 / 8 / 2 / 11; justify-self: end; padding: 2px 0; white-space: nowrap; }
.rv, .dv { align-self: end; height: 16px; line-height: 16px; padding-right: 2px; text-align: right; background: #400000; color: #c01010; font-size: 12px; }
.rv { grid-area: 3 / 4 / 4 / 6; }
.dv { grid-area: 3 / 8; width: 26px; }
.vs { display: flex; flex-direction: column; margin-top: 16px; background: #fff; }
.vs button { height: 15px; background: #d4d0c8; color: #000; font-size: 5px; border: 1px solid #a0a0a0; }
.vs i { height: 7px; margin: 1px 0 auto; background: #d4d0c8; border: 1px solid #808080; }
.rs { grid-area: 1 / 6 / 4 / 7; }
.ds { grid-area: 1 / 9 / 4 / 10; }
.pick { grid-area: 2 / 7 / 3 / 9; position: relative; align-self: center; width: 36px; height: 22px; margin-left: 4px; }
.pick select { appearance: none; width: 100%; height: 100%; padding: 0 3px; border: 2px solid; border-color: #a8a49c #fff #fff #a8a49c; background: #800000; color: #f07818; font-size: 13px; }
.pick i { position: absolute; right: 2px; top: 2px; width: 16px; height: 18px; background: #d4d0c8; border: 1px solid; border-color: #fff #606060 #606060 #fff; color: #000; font: 7px/16px "DejaVu Sans", sans-serif; text-align: center; pointer-events: none; }
.checks { display: grid; grid-template-columns: 1fr 1fr; margin-top: 14px; font: 10px Roboto, sans-serif; }
.checks label { display: flex; align-items: center; gap: 4px; height: 12px; white-space: nowrap; }
.checks input { appearance: none; width: 12px; height: 12px; margin: 0; background: #fff; border: 1px solid #808080; }
.checks input:checked::after { content: ""; display: block; width: 7px; height: 4px; margin: 1px; border: solid #000; border-width: 0 0 2px 2px; transform: rotate(-45deg); }
.val { width: 30px; height: 15px; margin: 6px 0 0 auto; background: #400000; color: #d01010; font: 11px "Liberation Sans", sans-serif; line-height: 15px; text-align: right; padding-right: 1px; }
.hs { display: flex; justify-content: flex-end; height: 9px; margin-top: 2px; background: #fff; }
.hs button { width: 14px; background: #d4d0c8; color: #000; border: 1px solid #808080; font-size: 5px; }
.track { margin-top: 11px; padding: 7px 6px 8px; }
.meteor { width: 25px; height: 24px; margin-left: auto; border: 1px solid #f0ead0; }
.meteor svg { width: 22px; height: 22px; }
.trk { height: 19px; margin-top: 9px; background: #800000; border: 2px solid; border-color: #808080 #fff #fff #808080; }
.park { margin-top: 12px; padding: 8px 6px 4px; }
.park button { width: 100%; height: 18px; border: 1px solid #f0ead0; }

.pop { position: absolute; margin: 0; padding: 2px; list-style: none; background: #d4d0c8; border: 1px solid; border-color: #f4f2ee #505050 #505050 #f4f2ee; box-shadow: 1px 1px #303030; }
.pop li { position: relative; height: 18px; }
.pop button { width: 100%; height: 18px; justify-content: flex-start; padding-left: 16px; line-height: 16px; }
.pop .sep { height: 9px; padding: 3px 0; }
.pop .sep::after { content: ""; display: block; height: 2px; background: linear-gradient(#808080 50%, #fff 50%); }
.pop .on { background: #0a246a; color: #fff; }
.pop .off { color: #8c8982; text-shadow: 1px 1px #fff; }
.pop .more::after { content: ""; position: absolute; right: 4px; top: 5px; border: solid transparent; border-width: 4px 0 4px 5px; border-left-color: currentColor; }
.ctx { left: 808px; top: 453px; width: 135px; }
.sub { left: 940px; top: 498px; width: 168px; }
.aim { position: absolute; left: 774px; top: 428px; width: 56px; height: 56px; pointer-events: none; }
.cursor { position: absolute; left: 1094px; top: 546px; width: 13px; height: 22px; pointer-events: none; }
</style>
